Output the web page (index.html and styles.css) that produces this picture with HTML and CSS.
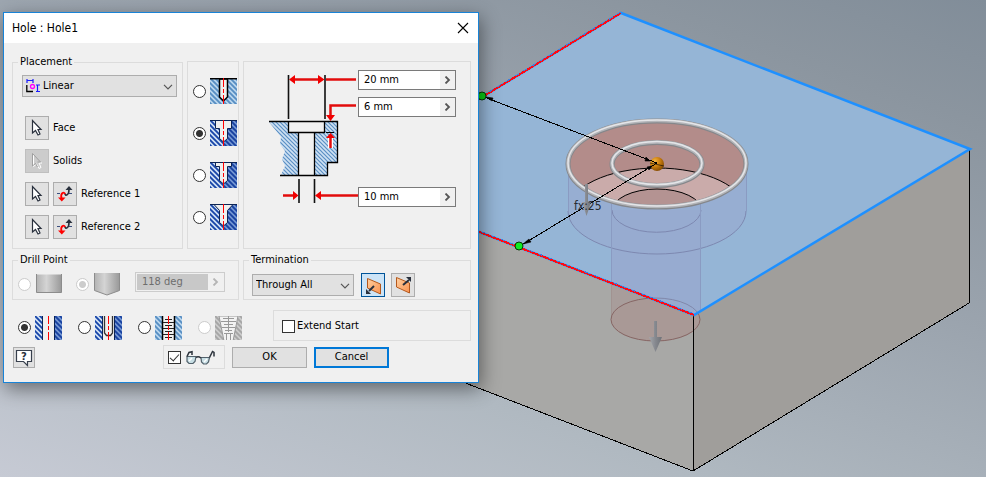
FILE: index.html
```html
<!DOCTYPE html>
<html lang="en">
<head>
<meta charset="utf-8">
<title>Hole : Hole1</title>
<link rel="stylesheet" href="styles.css">
</head>
<body>
<main class="viewport">
<svg class="scene" viewBox="0 0 986 477" preserveAspectRatio="xMinYMin slice" role="img" aria-label="Block with counterbore hole preview">
  <defs>
    <linearGradient id="arrowTone" x1="0" x2="1"><stop offset="0" stop-color="#a4a6ab"/><stop offset=".5" stop-color="#85888e"/><stop offset="1" stop-color="#6f7278"/></linearGradient>
    <radialGradient id="ball" cx=".35" cy=".3" r=".75"><stop offset="0" stop-color="#f4b545"/><stop offset=".45" stop-color="#d08310"/><stop offset="1" stop-color="#824800"/></radialGradient>
    <clipPath id="ringClip"><ellipse cx="657" cy="164" rx="88" ry="42"/></clipPath>
    <clipPath id="topClip"><path d="M621 13L970 149 694 315 345 180z"/></clipPath>
    <clipPath id="frontClip"><path d="M345 180L694 315 970 149V471H345z"/></clipPath>
  </defs>
  <path d="M345 180L694 315 693 471 345 336z" fill="#a8a8a6"/>
  <path d="M694 315L970 149 969 303 693 471z" fill="#a09e9b"/>
  <path d="M621 13L970 149 694 315 345 180z" fill="#95b5d6"/>
  <path class="edge" d="M412 344L468 384 693 471 969 303V149M693 315V471" fill="none" stroke="#000"/>
  <g clip-path="url(#topClip)">
    <path d="M568 164V211A89 43 0 0 0 746 211V164z" fill="#97aed2"/>
    <path d="M611 210V320H700V210z" fill="#97abd0"/>
    <path d="M568 211A89 43 0 0 0 746 211M612 210A44 22 0 0 0 701 210" fill="none" stroke="#7d88b0"/>
    <path d="M568.500 170V211M746.500 170V211M611.500 204V320M700.500 204V320" stroke="#8a9bc2"/>
    <ellipse cx="655.500" cy="319.500" rx="44.500" ry="21.500" fill="none" stroke="#8088aa"/>
  </g>
  <g clip-path="url(#frontClip)">
    <path d="M611 280V320A44.500 21.500 0 0 0 700 320V290z" fill="#a89d9b"/>
    <path d="M611.500 280V320" stroke="#a19391"/>
    <ellipse cx="655.500" cy="319.500" rx="44.500" ry="21.500" fill="#a99996" stroke="#866664"/>
    <path class="edge" d="M693 315V345" stroke="#000"/>
  </g>
  <path d="M345 180L621 13 970 149 694 315z" fill="none" stroke="#1e90ff" stroke-width="2.500"/>
  <path class="edge" d="M621 13L345 180 694 315" fill="none" stroke="#ff0a14" stroke-width="2"/>
  <path class="edge" d="M621 12L345 179 694 314" fill="none" stroke="#3d7fe0" stroke-width="1" stroke-dasharray="4 6"/>
  <g clip-path="url(#ringClip)">
    <path d="M560 115H750V215H560z" fill="#b38c8a"/>
    <ellipse cx="657" cy="211" rx="89" ry="43" fill="#caabaa" stroke="#000"/>
    <ellipse cx="657" cy="211" rx="45" ry="22" fill="#b49392" stroke="#000"/>
  </g>
  <g fill="none">
    <ellipse cx="657" cy="164" rx="89" ry="43" stroke="#85878b" stroke-width="5"/>
    <ellipse cx="657" cy="163.500" rx="89" ry="43" stroke="#b4b6ba" stroke-width="3.500"/>
    <ellipse cx="657" cy="163" rx="89" ry="43" stroke="#e4e5e8" stroke-width="1.500"/>
    <ellipse cx="657" cy="164" rx="45" ry="21.500" stroke="#85878b" stroke-width="5"/>
    <ellipse cx="657" cy="163.500" rx="45" ry="21.500" stroke="#b4b6ba" stroke-width="3.500"/>
    <ellipse cx="657" cy="163" rx="45" ry="21.500" stroke="#e4e5e8" stroke-width="1.500"/>
  </g>
  <circle cx="657" cy="164" r="7" fill="url(#ball)"/>
  <path class="edge" d="M484 97L657 163 520 246" fill="none" stroke="#000"/>
  <path d="M486 97l7 1-1 3zM523 244l6-5 2 3zM650 161l-4-4-1 4zM652 166l-5 1 2 3zM650 163l14 3" stroke="#000" stroke-width=".6"/>
  <g stroke="#053805"><circle cx="482" cy="96" r="4" fill="#09cf14"/><circle cx="519" cy="246" r="4" fill="#10ec24"/></g>
  <path d="M585 184h3v18h3l-4.500 14-4.500-14h3z" fill="url(#arrowTone)"/>
  <path d="M654 321h3v16h5l-6.500 15-6.500-15h5z" fill="url(#arrowTone)"/>
  <text class="scene-label" x="574" y="210">fx:25</text>
</svg>

<form class="dialog" aria-labelledby="dialog-title">
  <svg class="defs" width="0" height="0" aria-hidden="true">
    <defs>
      <pattern id="hatch" width="5" height="5" patternUnits="userSpaceOnUse"><path d="M0 0h5v5H0z" fill="#cfe0f4"/><path d="M-1-1L6 6M-1 4L1 6M4-1L6 1" stroke="#1744a8" stroke-width="1.800"/></pattern>
      <pattern id="hatchDeep" width="5" height="5" patternUnits="userSpaceOnUse"><path d="M0 0h5v5H0z" fill="#7396d2"/><path d="M-1-1L6 6M-1 4L1 6M4-1L6 1" stroke="#163f9f" stroke-width="1.800"/></pattern>
      <pattern id="hatchPale" width="5" height="5" patternUnits="userSpaceOnUse"><path d="M0 0h5v5H0z" fill="#b9d6ee"/><path d="M-1-1L6 6M-1 4L1 6M4-1L6 1" stroke="#568dc2" stroke-width="1.800"/></pattern>
      <pattern id="hatchFine" width="4" height="4" patternUnits="userSpaceOnUse"><path d="M0 0h4v4H0z" fill="#cfe1f3"/><path d="M-1-1L5 5M-1 3L1 5M3-1L5 1" stroke="#5a8fc4" stroke-width="1.200"/></pattern>
      <pattern id="hatchGray" width="5" height="5" patternUnits="userSpaceOnUse"><path d="M0 0h5v5H0z" fill="#ccc"/><path d="M-1-1L6 6M-1 4L1 6M4-1L6 1" stroke="#a5a5a5" stroke-width="1.800"/></pattern>
      <linearGradient id="steel"><stop offset="0" stop-color="#b3b3b3"/><stop offset=".4" stop-color="#d4d4d4"/><stop offset="1" stop-color="#999"/></linearGradient>
      <linearGradient id="orange" x2="1" y2="1"><stop offset="0" stop-color="#ffd0a0"/><stop offset="1" stop-color="#fa9250"/></linearGradient>
      <symbol id="cursor" viewBox="0 0 22 22"><path d="M6.500 3.500v12.500l3-2.500 2.500 4.500 2-1-2-4.500h3z" fill="#fff" stroke="#29303d" stroke-width="1.200"/></symbol>
      <symbol id="flip" viewBox="0 0 22 22"><path d="M3 10.500h3M15 10.500h3" stroke="#3c5080" stroke-width="1.200"/><path d="M11 10.500c0 3 4 2 4-4" fill="none" stroke="#29303d" stroke-width="1.600"/><path d="M11.500 7h7L15 3z" fill="#29303d"/><path d="M7.500 15.500c-1.500-6 3-7 3.500-4.500" fill="none" stroke="#f00" stroke-width="1.800"/><path d="M4 14.500h7.500l-3.700 4z" fill="#f00"/></symbol>
      <symbol id="chevron" viewBox="0 0 10 6"><path d="M1 .8l4 4 4-4" fill="none" stroke="#555" stroke-width="1.200"/></symbol>
    </defs>
  </svg>
  <header class="titlebar">
    <h1 class="title" id="dialog-title">Hole : Hole1</h1>
    <button class="close" type="button" aria-label="Close"><svg width="12" height="12" viewBox="0 0 12 12"><path d="M1 1l10 10M11 1L1 11" stroke="#000" stroke-width="1.100"/></svg></button>
  </header>

  <div class="content">
    <div class="row">
      <fieldset class="group placement">
        <legend>Placement</legend>
        <div class="placement-body">
        <div class="drop">
          <select class="select select-icon" aria-label="Placement"><option>Linear</option></select>
          <svg class="drop-icon" width="14" height="14" viewBox="0 0 14 14"><path d="M1 0v4M7 0v4M1 1.500h6M11.500 6v7M10 6h4M10 12.500h4" fill="none" stroke="#1a1aff" stroke-width="1.200"/><path d="M.8 6v6.500H7" fill="none" stroke="#000" stroke-width="1.300"/><circle cx="6.500" cy="7.500" r="2" fill="none" stroke="#f0f" stroke-width="1.300"/></svg>
          <svg class="drop-arrow" width="10" height="6"><use href="#chevron"/></svg>
        </div>
        <div class="picks">
          <div class="pick"><button class="tool" type="button" aria-labelledby="p1"><svg width="22" height="22"><use href="#cursor"/></svg></button><span id="p1">Face</span></div>
          <div class="pick"><button class="tool" type="button" disabled aria-labelledby="p2"><svg width="22" height="22" viewBox="0 0 22 22"><path d="M7.500 4.500v12l3-2.500 2.500 4.500 2-1-2-4.500h3" fill="none" stroke="#fff"/><path d="M6.500 3.500v12.500l3-2.500 2 3.500M6.500 3.500l8 8.500h-3" fill="none" stroke="#a0a0a0"/></svg></button><span id="p2">Solids</span></div>
          <div class="pick"><button class="tool" type="button" aria-labelledby="p3"><svg width="22" height="22"><use href="#cursor"/></svg></button><button class="tool" type="button" aria-label="Flip"><svg width="22" height="22"><use href="#flip"/></svg></button><span id="p3">Reference 1</span></div>
          <div class="pick"><button class="tool" type="button" aria-labelledby="p4"><svg width="22" height="22"><use href="#cursor"/></svg></button><button class="tool" type="button" aria-label="Flip"><svg width="22" height="22"><use href="#flip"/></svg></button><span id="p4">Reference 2</span></div>
        </div>
        </div>
      </fieldset>

      <div class="group shapes" role="radiogroup" aria-label="Hole type">
        <label class="choice"><input class="radio" type="radio" name="shape" aria-label="Drilled"><svg width="27" height="26" viewBox="0 0 27 26"><path d="M0 0h27v26H0z" fill="url(#hatchPale)"/><path d="M9.500 1v18l4 4 4-4V1z" fill="#efefef" stroke="#000" stroke-width="1.500"/><path d="M0 .7h27" stroke="#000" stroke-width="1.500"/><path class="axis" d="M13.500-2v30"/></svg></label>
        <label class="choice"><input class="radio" type="radio" name="shape" checked aria-label="Counterbore"><svg width="27" height="26" viewBox="0 0 27 26"><path d="M0 0h14v26H0z" fill="url(#hatch)"/><path d="M14 0h13v26H14z" fill="url(#hatchDeep)"/><path d="M5.500.5v8h4v10l4 3.500 4-3.500v-10h4v-8z" fill="#efefef" stroke="#0c2454"/><path d="M0 .5h27" stroke="#0c2454"/><path class="axis" d="M13.500-2v30"/></svg></label>
        <label class="choice"><input class="radio" type="radio" name="shape" aria-label="Spotface"><svg width="27" height="26" viewBox="0 0 27 26"><path d="M0 0h14v26H0z" fill="url(#hatch)"/><path d="M14 0h13v26H14z" fill="url(#hatchDeep)"/><path d="M5.500.5v4h4v14l4 3.500 4-3.500v-14h4v-4z" fill="#efefef" stroke="#0c2454"/><path d="M0 .5h27" stroke="#0c2454"/><path class="axis" d="M13.500-2v30"/></svg></label>
        <label class="choice"><input class="radio" type="radio" name="shape" aria-label="Countersink"><svg width="27" height="26" viewBox="0 0 27 26"><path d="M0 0h14v26H0z" fill="url(#hatch)"/><path d="M14 0h13v26H14z" fill="url(#hatchDeep)"/><path d="M4 .5l5.500 6v12l4 3.500 4-3.500v-12l5.500-6z" fill="#efefef" stroke="#0c2454"/><path d="M0 .5h27" stroke="#0c2454"/><path class="axis" d="M13.500-2v30"/></svg></label>
      </div>

      <div class="group sizes">
        <svg width="90" height="137" viewBox="0 0 90 137" aria-hidden="true">
          <path d="M1 52h19v10h10v43H13l4-9-3-7 3-8-5-7 1-7z" fill="url(#hatchFine)"/>
          <path d="M57 52h13v40H60v13H47V62h10z" fill="url(#hatchFine)"/>
          <path d="M1 51.500h68.500V92.500H59.500V105.500H12M20.500 52v10.500h36V52M30.500 62.500v43M46.500 62.500v43" fill="none" stroke="#000" stroke-width="1.300"/>
          <path d="M20.500 5v44M57 5v44M31 109v24M46.500 109v24" stroke="#111" stroke-width="1.600"/>
          <path d="M58 62.500h8" stroke="#000"/>
          <path d="M24 9.500h29M58 9.500h30M88 35.500H62.500V46M15 125.500h11M51 125.500h39" fill="none" stroke="#e20c0c" stroke-width="2.500"/>
          <path d="M62.500 78V67" stroke="#fff" stroke-width="5"/><path d="M62.500 78V67" stroke="#e20c0c" stroke-width="2.500"/>
          <path d="M21 9.500l6-4.500v9zM56.500 9.500L50 5v9zM62.500 51L58 45h9zM62.500 63L58 68h9zM30.500 125.500L25 121v9zM47 125.500l6-4.500v9z" fill="#f00000"/>
        </svg>
        <div class="size-fields">
          <div class="field"><input class="value" type="text" value="20 mm" aria-label="Counterbore diameter"><button class="more" type="button" aria-label="More"><svg width="7" height="8" viewBox="0 0 7 8"><path d="M1.500.5L5 4 1.500 7.500" fill="none" stroke="#555" stroke-width="1.800"/></svg></button></div>
          <div class="field"><input class="value" type="text" value="6 mm" aria-label="Counterbore depth"><button class="more" type="button" aria-label="More"><svg width="7" height="8" viewBox="0 0 7 8"><path d="M1.500.5L5 4 1.500 7.500" fill="none" stroke="#555" stroke-width="1.800"/></svg></button></div>
          <div class="field field-last"><input class="value" type="text" value="10 mm" aria-label="Hole diameter"><button class="more" type="button" aria-label="More"><svg width="7" height="8" viewBox="0 0 7 8"><path d="M1.500.5L5 4 1.500 7.500" fill="none" stroke="#555" stroke-width="1.800"/></svg></button></div>
        </div>
      </div>
    </div>

    <div class="row">
      <fieldset class="group drill" disabled>
        <legend>Drill Point</legend>
        <div class="drill-row">
          <label class="choice choice-drill"><input class="radio" type="radio" name="point" aria-label="Flat"><svg width="27" height="24" viewBox="0 0 27 24"><path d="M.5 2.500h25v18H.5z" fill="url(#steel)"/><path d="M.5 2v18.500h25V2" fill="none" stroke="#8c8c8c"/></svg></label>
          <label class="choice choice-drill"><input class="radio" type="radio" name="point" checked aria-label="Angle"><svg width="27" height="24" viewBox="0 0 27 24"><path d="M.5 1h25v17.500L13 23 .5 18.500z" fill="url(#steel)"/><path d="M.5 1v17.500L13 23l12.500-4.500V1" fill="none" stroke="#8c8c8c"/></svg></label>
          <div class="field field-off"><input class="value" type="text" value="118 deg" aria-label="Point angle"><button class="more" type="button" aria-label="More"><svg width="7" height="8" viewBox="0 0 7 8"><path d="M1.500.5L5 4 1.500 7.500" fill="none" stroke="#b5b5b5" stroke-width="1.800"/></svg></button></div>
        </div>
      </fieldset>
      <fieldset class="group termination">
        <legend>Termination</legend>
        <div class="term-row">
          <div class="drop drop-term"><select class="select" aria-label="Termination"><option>Through All</option></select><svg class="drop-arrow" width="10" height="6"><use href="#chevron"/></svg></div>
          <button class="tool tool-on" type="button" aria-label="Direction 1"><svg width="22" height="22" viewBox="0 0 22 22"><path d="M5.500 4.500L18.500 10v10L5.500 14z" fill="url(#orange)" stroke="#b4581c"/><path d="M12 12l-5 5" stroke="#29303d" stroke-width="2"/><path d="M4 20v-5l5 5z" fill="#29303d"/></svg></button>
          <button class="tool tool-next" type="button" aria-label="Direction 2"><svg width="22" height="22" viewBox="0 0 22 22"><path d="M4.500 3.500L17.500 9v10L4.500 13z" fill="url(#orange)" stroke="#b4581c"/><path d="M11 11l6-5" stroke="#29303d" stroke-width="2"/><path d="M19 3v5l-5-5z" fill="#29303d"/></svg></button>
        </div>
      </fieldset>
    </div>

    <div class="row options">
      <div class="kinds" role="radiogroup" aria-label="Thread type">
        <label class="choice"><input class="radio" type="radio" name="kind" checked aria-label="Simple"><svg width="27" height="24" viewBox="0 0 27 24"><path d="M0 0h8v24H0z" fill="url(#hatch)"/><path d="M19 0h8v24h-8z" fill="url(#hatchDeep)"/><path d="M7.500 0v24M19.500 0v24" stroke="#0c2454"/><path class="axis" d="M13.500-3v30"/></svg></label>
        <label class="choice"><input class="radio" type="radio" name="kind" aria-label="Clearance"><svg width="27" height="24" viewBox="0 0 27 24"><path d="M0 0h8v24H0z" fill="url(#hatch)"/><path d="M19 0h8v24h-8z" fill="url(#hatchDeep)"/><path d="M7.500 0v24M19.500 0v24" stroke="#0c2454"/><path d="M9.500 0v17l2 2.500h4l2-2.500V0" fill="#efefef" stroke="#333" stroke-width="1.300"/><path class="axis" d="M13.500-3v30"/></svg></label>
        <label class="choice"><input class="radio" type="radio" name="kind" aria-label="Tapped"><svg width="27" height="24" viewBox="0 0 27 24"><path d="M0 0h27v24H0z" fill="url(#hatchPale)"/><path d="M7.500-1h12v26h-12z" fill="#efefef" stroke="#000" stroke-width="1.500"/><path d="M10 3.500h7M8 6.500h11M10 9.500h7M8 12.500h11M10 15.500h7M8 18.500h11M10 21.500h7" stroke="#222"/><path class="axis" d="M13.500-3v30"/></svg></label>
        <label class="choice"><input class="radio" type="radio" name="kind" disabled aria-label="Taper tapped"><svg width="27" height="24" viewBox="0 0 27 24"><path d="M0 0h27v24H0z" fill="url(#hatchGray)"/><path d="M4 0l5 25h9l5-25z" fill="#f2f2f2" stroke="#999"/><path d="M8 2.500h11M6 5.500h15M9 8.500h9M7 11.500h13M10 14.500h7M9 17.500h9M11.500 18v6M15.500 18v6M13.500 0v16" stroke="#999"/></svg></label>
      </div>
      <div class="group extend"><label class="tick-label"><input class="tick" type="checkbox">Extend Start</label></div>
    </div>

    <div class="row footer">
      <button class="help" type="button" aria-label="Help"><svg width="18" height="18" viewBox="0 0 18 18"><path d="M1.500 1.500h15v11h-4v4l-4-4h-7z" fill="#fff" stroke="#38404d" stroke-width="1.200"/><text class="help-mark" x="9" y="11" text-anchor="middle">?</text></svg></button>
      <label class="group preview"><input class="tick" type="checkbox" checked aria-label="Preview"><svg width="29" height="16" viewBox="0 0 29 16"><path d="M1 7.500h9l-1 5-2 2H3l-2-2zM15 8.500h8.500l-1 4.500-2 2h-3l-2-2z" fill="#c8dfe5" stroke="#52616b" stroke-width="1.200"/><path d="M10 8.500c2-1.500 3-1 5 .5M1 7.500l2-4 3-.8V6M23.500 8.500l3-6 1.500 1v4" fill="none" stroke="#2c333c" stroke-width="1.500"/><path d="M3 12l3-3M18 13l3-3" stroke="#fff" stroke-width="1.500"/></svg></label>
      <button class="button" type="button">OK</button>
      <button class="button button-main" type="button">Cancel</button>
    </div>
  </div>
</form>
</main>
</body>
</html>
```
FILE: styles.css
```css
* { box-sizing: border-box; }
body {
  margin: 0;
  font: 11px/14px "DejaVu Sans Condensed", "DejaVu Sans", sans-serif;
  color: #000;
}
button, input, select { margin: 0; font: inherit; color: inherit; }
svg { display: block; flex: none; }
.viewport {
  position: relative;
  min-height: 100vh;
  overflow: hidden;
  background: linear-gradient(20deg, #c6cad4 0%, #b0b9c1 30%, #9ba4ae 60%, #8b959f 85%, #818d99 100%);
}
.scene { position: absolute; inset: 0; width: 100%; height: 100%; }
.scene-label { font: 12px "DejaVu Sans Condensed", "DejaVu Sans", sans-serif; fill: #262b33; }
.edge { shape-rendering: crispEdges; }
.defs { position: absolute; }

.dialog {
  position: relative;
  width: 476px;
  margin: 12px 0 0 3px;
  border: 1px solid #1883d7;
  background: #f0f0f0;
  box-shadow: 2px 6px 18px rgba(0, 0, 0, .45);
}
.titlebar {
  display: flex;
  align-items: center;
  justify-content: space-between;
  height: 30px;
  padding: 0 8px;
  background: #fff;
}
.title { margin: 0; font-size: 12px; font-weight: 400; }
.close { padding: 1px; border: 0; background: none; }
.content { padding: 12px 7px 13px 8px; }
.row { display: flex; gap: 4px; }
.row + .row { margin-top: 4px; }
.group { min-width: 0; margin: 0; padding: 0; border: 1px solid #dcdcdc; }
legend { margin-left: 5px; padding: 0 2px; }

.placement { flex: 0 0 171px; }
.placement-body { padding: 6px 5px 9px 9px; }
.drop { position: relative; }
.select {
  display: block;
  width: 100%;
  height: 22px;
  padding: 0 20px 0 3px;
  border: 1px solid #adadad;
  border-radius: 0;
  background: #e1e1e1;
  appearance: none;
}
.select-icon { padding-left: 20px; }
.drop-icon { position: absolute; left: 4px; top: 4px; }
.drop-arrow { position: absolute; right: 4px; top: 9px; }
.picks { display: grid; gap: 9px; padding: 19px 0 0 3px; }
.pick { display: flex; align-items: center; gap: 4px; }
.tool { flex: none; width: 24px; height: 24px; padding: 0; border: 1px solid #adadad; background: #e1e1e1; }
.tool:disabled { border-color: #bfbfbf; background: #ccc; }
.tool-on { border-color: #005499; background: #cce4f7; }

.shapes { display: grid; align-content: start; gap: 16px; margin-top: 6px; padding: 16px 1px 17px 5px; }
.choice { display: flex; align-items: center; gap: 4px; }
.radio {
  flex: none;
  width: 13px;
  height: 13px;
  border: 1px solid #333;
  border-radius: 50%;
  background: #fff;
  appearance: none;
}
.radio:checked { background: radial-gradient(circle, #333 3px, #fff 4px); }
.radio:disabled { border-color: #ccc; }
.radio:checked:disabled { background: radial-gradient(circle, #ccc 3px, #fff 4px); }
.axis { fill: none; stroke: #f00; stroke-width: 1; stroke-dasharray: 11 2 4 2; }

.sizes { display: flex; flex: 1; align-items: flex-start; margin-top: 6px; padding: 8px 14px 8px 24px; }
.size-fields { display: grid; flex: 1; gap: 7px; }
.field { display: flex; height: 20px; border: 1px solid #7a7a7a; background: #fff; }
.field-last { margin-top: 63px; }
.value { flex: 1; width: 0; min-width: 0; padding: 0 5px; border: 0; background: none; }
.more { display: grid; place-items: center; width: 15px; padding: 0; border: 0; background: #f0f0f0; }

.drill { flex: 0 0 227px; }
.drill-row { display: flex; padding: 5px 5px 3px; }
.choice-drill { gap: 5px; width: 58px; }
.drill-row .field { flex: 1; margin: 0 8px 0 1px; padding: 1px; border-color: #ccc; background: #f0f0f0; }
.field-off .value { background: #c8c8c8; color: #6d6d6d; }
.termination { flex: 1; }
.term-row { display: flex; align-items: center; padding: 6px 8px 2px; }
.drop-term { width: 102px; margin-right: 7px; }
.tool-next { margin-left: 6px; }

.row.options { align-items: center; justify-content: space-between; margin-top: 10px; padding-left: 6px; }
.kinds { display: flex; gap: 16px; padding-top: 4px; }
.kinds .choice { width: 44px; }
.extend { flex: 0 0 198px; padding: 8px 8px 7px; }
.tick-label { display: flex; align-items: center; gap: 2px; }
.tick { position: relative; flex: none; width: 13px; height: 13px; border: 1px solid #333; background: #fff; appearance: none; }
.tick:checked::after {
  content: "";
  position: absolute;
  left: 3px;
  top: 0;
  width: 4px;
  height: 8px;
  border: solid #333;
  border-width: 0 1px 1px 0;
  transform: rotate(42deg);
}
.footer { align-items: center; gap: 7px; padding-left: 1px; }
.help { width: 22px; height: 21px; padding: 1px; border: 1px solid #adadad; background: #e1e1e1; }
.help-mark { font: bold 10px "DejaVu Sans", sans-serif; fill: #29303d; }
.preview { display: flex; align-items: center; gap: 5px; width: 62px; height: 24px; margin-left: 121px; padding: 0 4px; }
.button { width: 75px; height: 21px; padding: 0; border: 1px solid #adadad; background: #e1e1e1; }
.button-main { border: 2px solid #0078d7; }
```
